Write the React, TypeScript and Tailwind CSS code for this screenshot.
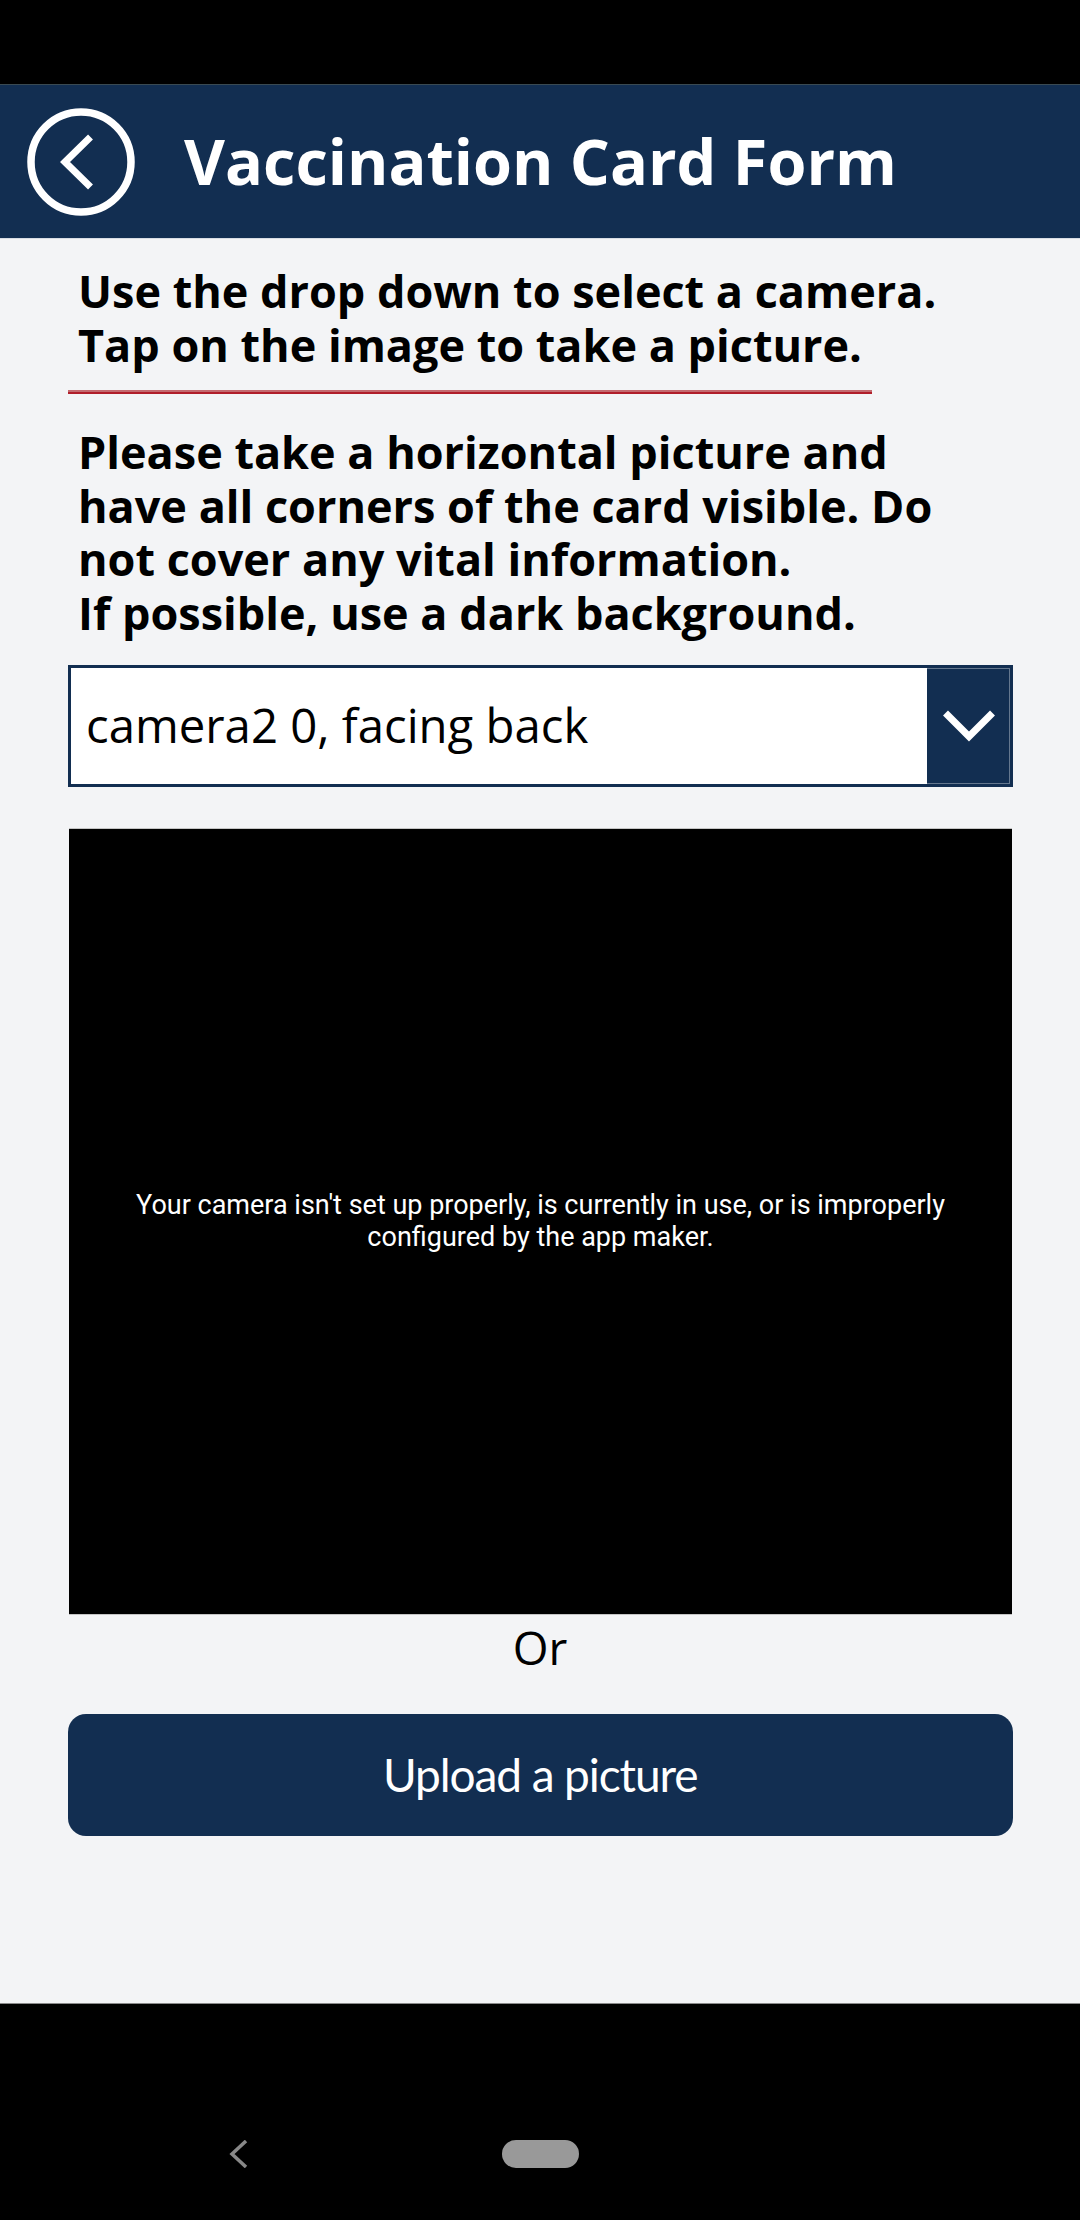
export default function App() {
  const open = "font-['Open_Sans',sans-serif]";
  return (
    <div className="flex h-[2220px] w-[1080px] flex-col overflow-hidden bg-black">
      <div className="h-[85px] shrink-0 border-b border-[#3a4a52] bg-black" />
      <header className="flex h-[154px] shrink-0 items-center border-b border-[#d8dde4] bg-[#122e51] pl-[27px]">
        <svg width="108" height="108" viewBox="0 0 108 108" fill="none" stroke="#fff" className="mt-[1px] shrink-0">
          <circle cx="54" cy="54" r="50" strokeWidth="7.5" />
          <path d="M63.5 29 L38 54 L63.5 79" strokeWidth="7" />
        </svg>
        <h1 className={`${open} mb-[3px] ml-[49px] text-[63px] leading-none font-bold text-white`}>Vaccination Card Form</h1>
      </header>
      <main className="flex h-[1765px] shrink-0 flex-col items-start border-b border-[#8a8a8a] bg-[#f3f4f6]">
        <p className={`${open} ml-[78px] mt-[25px] text-[45px] leading-[54px] font-bold text-black`}>
          Use the drop down to select a camera.
          <br />
          Tap on the image to take a picture.
        </p>
        <div className="ml-[68px] mt-[18px] h-[4px] w-[804px] border-b-2 border-[#b01e2a] bg-[#c46a70]" />
        <p className={`${open} ml-[78px] mt-[31px] w-[900px] text-[45px] leading-[53.5px] font-bold text-black`}>
          Please take a horizontal picture and
          <br />
          have all corners of the card visible. Do
          <br />
          not cover any vital information.
          <br />
          If possible, use a dark background.
        </p>
        <div className="ml-[68px] mt-[26px] flex h-[122px] w-[945px] border-[3px] border-[#122e51] bg-white">
          <div className={`${open} flex min-w-0 flex-1 items-center pl-[15px] pb-[1px] text-[47.3px] text-black`}>camera2 0, facing back</div>
          <div className="flex w-[83px] shrink-0 items-center justify-center border-y border-r border-[#64778e] bg-[#122e51] pl-[1px]">
            <svg width="52" height="32" viewBox="0 0 52 32" fill="none" stroke="#fff" strokeWidth="7">
              <path d="M2.5 3 L26 26.5 L49.5 3" />
            </svg>
          </div>
        </div>
        <div className="ml-[69px] mt-[41px] flex h-[787px] w-[943px] items-center justify-center border-y border-[#c4c4c4] bg-black px-[60px] pb-[2px]">
          <p className="text-center font-['Roboto',sans-serif] text-[27px] leading-[32px] text-white">
            Your camera isn't set up properly, is currently in use, or is improperly configured by the app maker.
          </p>
        </div>
        <p className={`${open} w-full pt-[1px] text-center text-[46px] leading-[62px] text-black`}>Or</p>
        <button className="ml-[67.5px] mt-[35.5px] flex h-[122px] w-[945.5px] items-center justify-center rounded-[18px] bg-[#122e51] font-['Lato',sans-serif] text-[46px] tracking-[-1.1px] text-white">
          Upload a picture
        </button>
      </main>
      <nav className="relative flex flex-1 items-start pt-[136px]">
        <svg width="20" height="28" viewBox="0 0 20 28" fill="none" stroke="#888" strokeWidth="3.5" className="ml-[228px]">
          <path d="M18 1 L4 14 L18 27" />
        </svg>
        <div className="ml-[254px] h-[28px] w-[77px] rounded-[14px] bg-[#999]" />
      </nav>
    </div>
  );
}
